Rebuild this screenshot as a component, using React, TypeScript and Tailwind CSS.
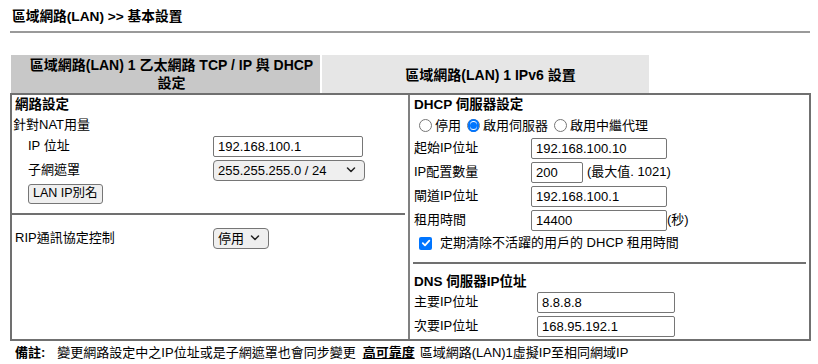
import React from "react";

const font = { fontFamily: '"Liberation Sans", Arial, "Noto Sans CJK TC", sans-serif' };

function Chevron() {
  return (
    <svg width="10" height="6" viewBox="0 0 10 6" className="shrink-0">
      <path d="M1.5 1 L5 4.5 L8.5 1" fill="none" stroke="#222" strokeWidth="1.5" strokeLinecap="round" strokeLinejoin="round" />
    </svg>
  );
}

function TextBox({ value, w }: { value: string; w: string }) {
  return (
    <div className={`${w} h-[21px] border border-[#767676] rounded-[2px] bg-white px-[4px] flex items-center text-[13px] leading-none`}>
      {value}
    </div>
  );
}

function SelectBox({ value, w }: { value: string; w: string }) {
  return (
    <div className={`${w} h-[21px] border border-[#767676] rounded-[4px] bg-[#efefef] pl-[4px] pr-[8px] flex items-center justify-between text-[13px] leading-none`}>
      <span>{value}</span>
      <Chevron />
    </div>
  );
}

function Radio({ checked }: { checked?: boolean }) {
  return (
    <span className="w-[13px] h-[13px] rounded-full border border-[#767676] bg-white flex items-center justify-center shrink-0">
      {checked ? <span className="w-[13px] h-[13px] rounded-full border-[2px] border-[#0075ff] flex items-center justify-center"><span className="w-[7px] h-[7px] rounded-full bg-[#0075ff]" /></span> : null}
    </span>
  );
}

export default function App() {
  return (
    <div className="w-[818px] h-[364px] bg-white text-black text-[13px] overflow-hidden" style={font}>
      <div className="px-[10px]">
        <div className="h-[31px] flex items-center pl-[2px] pt-[3px] font-bold text-[13.7px]">區域網路(LAN) &gt;&gt; 基本設置</div>
        <div className="h-[2px] bg-[#9a9a9a] w-[800px]" />
        <div className="h-[22px]" />
        <div className="flex gap-[2px] pl-[1px]">
          <div className="w-[309px] h-[38px] bg-[#c8c8c8] flex flex-col items-center justify-center font-bold text-[14px] leading-[18px] text-center pl-[12px]">
            <div>區域網路(LAN) 1 乙太網路 TCP / IP 與 DHCP</div>
            <div>設定</div>
          </div>
          <div className="w-[327px] h-[38px] bg-[#e6e6e6] flex items-center justify-center font-bold text-[14px] pt-[2px] pl-[10px]">
            區域網路(LAN) 1 IPv6 設置
          </div>
        </div>
        <div className="w-[801px] h-[248px] border-2 border-[#707070] grid grid-cols-[398px_1fr]">
          {/* Left column */}
          <div className="border-r-2 border-[#808080] flex flex-col">
            <div className="h-[20px] flex items-center pl-[3px] font-bold text-[13.5px]">網路設定</div>
            <div className="h-[19px] flex items-center pl-[1px]">針對NAT用量</div>
            <div className="h-[24px] flex items-center">
              <div className="w-[201px] pl-[16px]">IP 位址</div>
              <TextBox value="192.168.100.1" w="w-[150px]" />
            </div>
            <div className="h-[24px] flex items-center">
              <div className="w-[201px] pl-[16px]">子網遮罩</div>
              <SelectBox value="255.255.255.0 / 24" w="w-[152px]" />
            </div>
            <div className="h-[23px] flex items-center pl-[16px]">
              <div className="h-[20px] px-[4px] border border-[#767676] rounded-[3px] bg-[#efefef] flex items-center leading-none text-[12.5px]">LAN IP別名</div>
            </div>
            <div className="h-[8px]" />
            <div className="h-[2px] bg-[#707070] mr-[3px]" />
            <div className="h-[11px]" />
            <div className="h-[24px] flex items-center">
              <div className="w-[201px] pl-[3px]">RIP通訊協定控制</div>
              <SelectBox value="停用" w="w-[56px]" />
            </div>
          </div>
          {/* Right column */}
          <div className="flex flex-col">
            <div className="h-[20px] flex items-center pl-[4px] font-bold text-[13.5px]">DHCP 伺服器設定</div>
            <div className="h-[21px] flex items-center pl-[9px] gap-[3px]">
              <Radio />
              <span className="mr-[3px]">停用</span>
              <Radio checked />
              <span className="mr-[3px]">啟用伺服器</span>
              <Radio />
              <span>啟用中繼代理</span>
            </div>
            <div className="h-[24px] flex items-center">
              <div className="w-[121px] pl-[4px]">起始IP位址</div>
              <TextBox value="192.168.100.10" w="w-[136px]" />
            </div>
            <div className="h-[24px] flex items-center">
              <div className="w-[121px] pl-[4px]">IP配置數量</div>
              <TextBox value="200" w="w-[52px]" />
              <span className="ml-[4px]">(最大值. 1021)</span>
            </div>
            <div className="h-[24px] flex items-center">
              <div className="w-[121px] pl-[4px]">閘道IP位址</div>
              <TextBox value="192.168.100.1" w="w-[136px]" />
            </div>
            <div className="h-[24px] flex items-center">
              <div className="w-[121px] pl-[4px]">租用時間</div>
              <TextBox value="14400" w="w-[136px]" />
              <span>(秒)</span>
            </div>
            <div className="h-[22px] flex items-center pl-[9px] gap-[8px]">
              <span className="w-[13px] h-[13px] rounded-[2px] bg-[#0075ff] flex items-center justify-center">
                <svg width="10" height="10" viewBox="0 0 10 10">
                  <path d="M1.8 5.2 L4 7.3 L8.3 2.6" fill="none" stroke="white" strokeWidth="1.8" strokeLinecap="round" strokeLinejoin="round" />
                </svg>
              </span>
              <span>定期清除不活躍的用戶的 DHCP 租用時間</span>
            </div>
            <div className="h-[8px]" />
            <div className="h-[2px] bg-[#707070] mx-[3px]" />
            <div className="h-[26px] flex items-center pt-[10px] pl-[4px] font-bold text-[13.5px]">DNS 伺服器IP位址</div>
            <div className="h-[24px] flex items-center">
              <div className="w-[127px] pl-[4px]">主要IP位址</div>
              <TextBox value="8.8.8.8" w="w-[138px]" />
            </div>
            <div className="h-[24px] flex items-center">
              <div className="w-[127px] pl-[4px]">次要IP位址</div>
              <TextBox value="168.95.192.1" w="w-[138px]" />
            </div>
          </div>
        </div>
        <div className="h-[24px] flex items-center pl-[5px] text-[13px]">
          <span className="font-bold">備註:</span>
          <span className="ml-[12px]">變更網路設定中之IP位址或是子網遮罩也會同步變更</span>
          <span className="ml-[7px] font-bold underline">高可靠度</span>
          <span className="ml-[5px]">區域網路(LAN)1虛擬IP至相同網域IP</span>
        </div>
      </div>
    </div>
  );
}
